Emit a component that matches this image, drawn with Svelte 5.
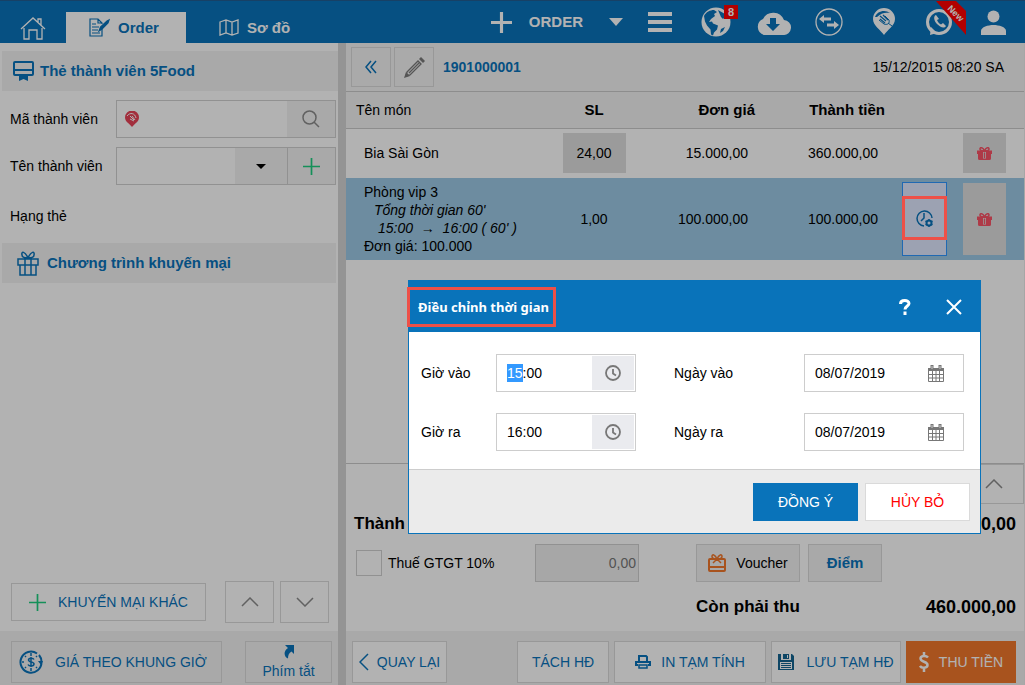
<script lang="ts">
  import { onMount } from 'svelte';

  type Item = {
    name: string;
    quantity: string;
    price: string;
    total: string;
    timed: boolean;
  };

  const items: Item[] = [
    { name: 'Bia Sài Gòn', quantity: '24,00', price: '15.000,00', total: '360.000,00', timed: false },
    { name: 'Phòng vip 3', quantity: '1,00', price: '100.000,00', total: '100.000,00', timed: true },
  ];

  let times = $state([
    { id: 'in', timeLabel: 'Giờ vào', time: '15:00', dateLabel: 'Ngày vào', date: '08/07/2019' },
    { id: 'out', timeLabel: 'Giờ ra', time: '16:00', dateLabel: 'Ngày ra', date: '08/07/2019' },
  ]);

  let showDialog = $state(true);

  // start with the hours selected so they can be typed over
  onMount(() => {
    const first = document.getElementById('time-in') as HTMLInputElement;
    first.focus();
    first.setSelectionRange(0, 2);
  });

  const close = () => {
    showDialog = false;
  };
</script>

{#snippet chevron(points: string)}
  <svg width="18" height="10" viewBox="0 0 18 10" fill="none" stroke="#8c8c8c" stroke-width="1.5">
    <polyline {points} />
  </svg>
{/snippet}

{#snippet plus(size: number, color: string, weight: number)}
  <svg width={size} height={size} viewBox="0 0 20 20" stroke={color} stroke-width={weight}>
    <path d="M10 0v20M0 10h20" />
  </svg>
{/snippet}

{#snippet gift()}
  <svg width="15" height="13" viewBox="0 0 15 13" fill="#f95366">
    <path d="M0 3.500h6V7H0zM9 3.500h6V7H9zM1 7h5v6H2.500Q1 13 1 11.500zM9 7h5v4.500Q14 13 12.500 13H9zM6 3.500h3V5H6zM6 11.500h3V13H6zM6.800 5.500h1.400v5.500H6.800z" />
    <path d="M7.500 4C6 0 3 0 3 2s2 2 4.500 2C10 4 12 4 12 2S9 0 7.500 4" fill="none" stroke="#f95366" stroke-width="1.600" />
  </svg>
{/snippet}

<div class="app">
  <header>
    <nav>
      <a class="home" href="#home" aria-label="Home">
        <svg width="26" height="24" viewBox="0 0 26 24" fill="none" stroke="#fff" stroke-width="1.3">
          <path d="M1 13 13 2l12 11M4 12v11h5v-9h8v9h5V12M18 6V3h3v6" />
        </svg>
      </a>
      <a class="tab active" href="#order">
        <svg width="21" height="19" viewBox="0 0 21 19" fill="none" stroke="#0973ba" stroke-width="1.2">
          <path d="M13 11v7H1V1h8l4 4v1M9 1v4h4M3 6h4M3 9h7M3 12h6M3 15h8" />
          <path d="m10 13 1.500-4L18 3l2-1-1 3-6 6z" fill="#0973ba" />
        </svg>
        Order
      </a>
      <a class="tab" href="#map">
        <svg width="20" height="17" viewBox="0 0 20 17" fill="none" stroke="#fff" stroke-width="1.3">
          <path d="m1 3 6-2 6 2 6-2v13l-6 2-6-2-6 2zM7 1v13M13 3v13" />
        </svg>
        Sơ đồ
      </a>
    </nav>

    <div class="tools">
      <button class="new-order">
        {@render plus(21, '#fff', 3)}
        ORDER
        <svg class="caret" width="14" height="8" viewBox="0 0 14 8" fill="#fff"><path d="M0 0h14L7 8z" /></svg>
      </button>
      <button class="menu" aria-label="Menu">
        <svg width="24" height="20" viewBox="0 0 24 20" fill="#fff"><path d="M0 0h24v4H0zM0 8h24v4H0zM0 16h24v4H0z" /></svg>
      </button>
      <button class="globe" aria-label="Online">
        <svg width="30" height="30" viewBox="0 0 30 30">
          <circle cx="15" cy="15" r="14.5" fill="#fff" />
          <path d="M3 9C5 5 9 3 13 3l3 2-3 2 1 2-4 3-2 3 3-.500 1 2 5 2-1 4-3 3-1 3-2-1-.500-5-3.500-4-2-4zM17 3l7 4 3 5-3-2-2 2-2-2zM20 22l4-2-2 4-3 2z" fill="#0973ba" />
        </svg>
        <span class="badge">8</span>
      </button>
      <button class="cloud" aria-label="Download">
        <svg width="36" height="25" viewBox="0 0 36 25">
          <path d="M9 25a8.500 8.500 0 0 1-1-16A11.500 11.500 0 0 1 29 10a7.500 7.500 0 0 1-1 15z" fill="#fff" />
          <path d="M15 8h6v6h4l-7 7-7-7h4z" fill="#0973ba" />
        </svg>
      </button>
      <button class="exchange" aria-label="Transfer">
        <svg width="28" height="28" viewBox="0 0 28 28">
          <circle cx="14" cy="14" r="13" fill="none" stroke="#fff" stroke-width="1.300" />
          <path d="m4 11 5-4v2.500h7v3H9V15zM24 17l-5-4v2.500h-7v3h7V21z" fill="#fff" />
        </svg>
      </button>
      <button class="place" aria-label="5Food">
        <svg width="24" height="28" viewBox="0 0 24 28">
          <path d="M12 27C9 22 1 18 1 11a11 11 0 0 1 22 0c0 7-8 11-11 16z" fill="#fff" />
          <path d="M3 9C5 3 13 1 18 5c-5-1-9 0-13 4z" fill="#0973ba" />
          <path d="m8 8 6 5M11 7l5 5M8 11l5 4" stroke="#0973ba" stroke-width="1.300" />
          <path d="m13 8 4 4c1 4-2 5-5 4l-5-4M16 15l4 3" fill="none" stroke="#0973ba" />
        </svg>
      </button>
      <button class="support" aria-label="Hotline">
        <svg width="40" height="35" viewBox="0 0 40 35">
          <circle cx="13" cy="21" r="11.500" fill="none" stroke="#fff" stroke-width="3" />
          <path d="m4 34 1-8 6 6z" fill="#fff" />
          <path d="M10 14c-3 1-2 6 1 9s7 5 9 2l-3-3-2 1.500c-2-1-3-2-4-4.500l2-1z" fill="#fff" />
          <path d="M10 0h20l10 10v24z" fill="#f00" />
          <text x="0" y="0" transform="translate(21 8) rotate(45)" font-size="9" font-weight="bold" fill="#fff">New</text>
        </svg>
      </button>
      <button class="user" aria-label="Account">
        <svg width="25" height="25" viewBox="0 0 25 25" fill="#fff">
          <circle cx="12.500" cy="6.500" r="6" />
          <path d="M0 25v-4c0-4 7-6 12.500-6S25 17 25 21v4z" />
        </svg>
      </button>
    </div>
  </header>

  <div class="columns">
    <aside>
      <h2 class="member">
        <svg width="21" height="20" viewBox="0 0 21 20" fill="none" stroke="#0973ba" stroke-width="2">
          <rect x="1" y="1" width="19" height="13" rx="1" />
          <path d="M1 9h19" />
          <path d="M6 14h9v6l-4.500-2L6 20z" fill="#0973ba" stroke="none" />
        </svg>
        Thẻ thành viên 5Food
      </h2>
      <div class="field">
        <label for="code">Mã thành viên</label>
        <div class="control">
          <svg class="pin" width="14" height="16" viewBox="0 0 14 16">
            <path d="M7 16C5 13 0 11 0 6.500a7 7 0 0 1 14 0C14 11 9 13 7 16z" fill="#e84458" />
            <path d="M2 5c3-4 8-3 9 2M5 5l4 4M7 5l3 4M5 8l4 2" stroke="#fff" fill="none" />
          </svg>
          <input id="code" type="text" />
          <button class="addon" aria-label="Tìm">
            <svg width="18" height="18" viewBox="0 0 18 18" fill="none" stroke="#8c8c8c" stroke-width="1.500">
              <circle cx="7.500" cy="7.500" r="6.500" /><path d="m12 12 5 5" />
            </svg>
          </button>
        </div>
      </div>
      <div class="field">
        <label for="name">Tên thành viên</label>
        <div class="control">
          <input id="name" type="text" />
          <button class="addon drop" aria-label="Chọn">
            <svg width="10" height="5" viewBox="0 0 10 5"><path d="M0 0h10L5 5z" /></svg>
          </button>
          <button class="addon add" aria-label="Thêm">{@render plus(17, '#1fcf80', 2)}</button>
        </div>
      </div>
      <p class="rank">Hạng thẻ</p>
      <h2 class="promo">
        <svg width="22" height="25" viewBox="0 0 22 25" fill="none" stroke="#0973ba" stroke-width="1.500">
          <path d="M1 8h20v6H1zM3 14v10h16V14M8 8v16M14 8v16M11 7C8 0 4 0 5 4c0 2 3 3 6 3s6-1 6-3c1-4-3-4-6 3" />
        </svg>
        Chương trình khuyến mại
      </h2>
      <div class="promo-actions">
        <button class="box other">{@render plus(17, '#1fcf80', 2)} KHUYẾN MẠI KHÁC</button>
        <button class="box arrow" aria-label="Lên">{@render chevron('1,9 9,1 17,9')}</button>
        <button class="box arrow" aria-label="Xuống">{@render chevron('1,1 9,9 17,1')}</button>
      </div>
      <div class="bottom">
        <button class="box by-time">
          <svg width="24" height="24" viewBox="0 0 24 24" fill="none" stroke="#0973ba" stroke-width="2">
            <path d="M22.500 12A10.500 10.500 0 1 1 18 3.500M22.500 12A10.500 10.500 0 0 0 20 5" />
            <path d="m19 11 3 4 2-4z" fill="#0973ba" stroke="none" />
            <path d="M12 3v3M12 18v3M3 12h2M6 6l1 1M6 18l1-1M18 6l-1 1M18 18l-1-1" stroke-width="1.500" />
            <path d="M15 9.500C14 7.500 9.500 8 9.500 10c0 2.500 5.500 1.500 5.500 4 0 2.500-5 2.500-6 .500M12 7v10" stroke-width="1.500" />
          </svg>
          GIÁ THEO KHUNG GIỜ
        </button>
        <button class="box shortcut">
          <svg width="11" height="14" viewBox="0 0 11 14" fill="#0973ba">
            <path d="M2 0h9v9L8.500 6.500C6 8 5 10 5 13.500 1 12 0 6 5 3z" />
          </svg>
          Phím tắt
        </button>
      </div>
    </aside>

    <main>
      <div class="bill-bar">
        <button class="box square" aria-label="Thu gọn">
          <svg width="12" height="14" viewBox="0 0 12 14" fill="none" stroke="#0973ba" stroke-width="1.500">
            <path d="M6 1 1 7l5 6M11 1 6 7l5 6" />
          </svg>
        </button>
        <button class="box square" aria-label="Sửa">
          <svg width="21" height="21" viewBox="0 0 21 21" fill="none" stroke="#7a7a7a" stroke-width="1.300">
            <path d="M3 15 14 4l3 3L6 18l-4 1zM5 16 15 6" />
            <path d="m15 2 2-2 4 4-2 2zM0 21l2-6 4 4z" fill="#7a7a7a" stroke="none" />
          </svg>
        </button>
        <a class="bill-no" href="#bill">1901000001</a>
        <time>15/12/2015 08:20 SA</time>
      </div>

      <table>
        <colgroup>
          <col />
          <col class="c-qty" />
          <col class="c-price" />
          <col class="c-total" />
          <col class="c-time" />
          <col class="c-gift" />
        </colgroup>
        <thead>
          <tr>
            <th class="name">Tên món</th>
            <th class="qty">SL</th>
            <th>Đơn giá</th>
            <th>Thành tiền</th>
            <th></th>
            <th></th>
          </tr>
        </thead>
        <tbody>
          {#each items as item}
            <tr class:selected={item.timed}>
              <td class="name">
                {item.name}
                {#if item.timed}
                  <div class="detail">Tổng thời gian 60'</div>
                  <div class="detail range">15:00 &nbsp;→&nbsp; 16:00 ( 60' )</div>
                  <div>Đơn giá: 100.000</div>
                {/if}
              </td>
              <td class="qty">
                {#if item.timed}
                  {item.quantity}
                {:else}
                  <button class="cell-button">{item.quantity}</button>
                {/if}
              </td>
              <td>{item.price}</td>
              <td>{item.total}</td>
              <td class="time">
                {#if item.timed}
                  <button class="adjust" aria-label="Điều chỉnh thời gian">
                    <svg width="18" height="18" viewBox="0 0 18 18" fill="none" stroke="#0973ba" stroke-width="1.500">
                      <path d="M16 8A7.500 7.500 0 1 0 8 16M8 3v5l-3 3" />
                      <circle cx="13" cy="13" r="2.500" stroke-width="2" />
                      <path d="M13 9v8M9.500 11l7 4M16.500 11l-7 4" stroke-dasharray="1.500 5" />
                    </svg>
                    <span class="mark"></span>
                  </button>
                {/if}
              </td>
              <td class="gift">
                <button class="cell-button" class:tall={item.timed} aria-label="Tặng">{@render gift()}</button>
              </td>
            </tr>
          {/each}
        </tbody>
      </table>

      <section class="totals">
        <button class="box collapse" aria-label="Thu gọn">{@render chevron('1,9 9,1 17,9')}</button>
        <div class="sum">
          <span>Thành tiền</span>
          <strong>460.000,00</strong>
        </div>
        <div class="extras">
          <input id="tax" type="checkbox" />
          <label for="tax">Thuế GTGT 10%</label>
          <input class="tax-value" type="text" value="0,00" aria-label="Tiền thuế" disabled />
          <div class="vouchers">
            <button class="box voucher">
              <svg width="18" height="18" viewBox="0 0 18 18" fill="none" stroke="#f1782c" stroke-width="2">
                <rect x="1" y="5" width="16" height="12" rx="1" />
                <path d="M1 13h16" />
                <path d="m5 9 4-4 4 4M9 5C7 0 4 0 4 2.500 4 5 7 5 9 5s5 0 5-2.500C14 0 11 0 9 5" stroke-width="1.500" />
              </svg>
              Voucher
            </button>
            <button class="box point">Điểm</button>
          </div>
        </div>
        <div class="sum due">
          <span>Còn phải thu</span>
          <strong>460.000,00</strong>
        </div>
      </section>

      <div class="bottom">
        <button class="box back">
          <svg width="10" height="18" viewBox="0 0 10 18" fill="none" stroke="#0973ba" stroke-width="1.500"><path d="M9 1 1 9l8 8" /></svg>
          QUAY LẠI
        </button>
        <button class="box split">TÁCH HĐ</button>
        <button class="box print">
          <svg width="16" height="14" viewBox="0 0 16 14" fill="none" stroke="#0973ba" stroke-width="2">
            <path d="M4 6V1h7l1 1v4M3 10H1V7h14v3h-2" />
            <path d="M4 10h8v3H4z" stroke-width="1.500" />
          </svg>
          IN TẠM TÍNH
        </button>
        <button class="box save">
          <svg width="16" height="16" viewBox="0 0 16 16">
            <path d="M0 0h3v6h10V0h1l2 2v14H0z" fill="#156591" />
            <path d="M5 0h6v5H5z" fill="#156591" />
            <path d="M9 1h1v3H9zM2 8h12v7H2z" fill="#fff" />
            <path d="M3 9.500h10M3 11.500h10M3 13.500h10" stroke="#156591" />
          </svg>
          LƯU TẠM HĐ
        </button>
        <button class="box pay">
          <svg width="10" height="20" viewBox="0 0 10 20" fill="none" stroke="#fff" stroke-width="2.500">
            <path d="M9 5.500C7 3 1.500 3.500 1.500 6.500c0 4 7 2.500 7 6.500 0 3.500-6 3.500-7.500 1M5 0v4M5 16v4" />
          </svg>
          THU TIỀN
        </button>
      </div>
    </main>
  </div>
</div>

{#if showDialog}
  <div class="backdrop">
    <div class="dialog" role="dialog" aria-labelledby="dialog-title">
      <div class="dialog-head">
        <h1 id="dialog-title">Điều chỉnh thời gian<span class="mark"></span></h1>
        <button class="help" aria-label="Trợ giúp">
          <svg width="12" height="16" viewBox="0 0 12 16" fill="none" stroke="#fff" stroke-width="3">
            <path d="M1.500 5c0-4.500 8.500-4.500 8.500-.500C10 7 6 7 6 10.500M6 12.500V16" />
          </svg>
        </button>
        <button class="close" aria-label="Đóng" onclick={close}>
          <svg width="16" height="16" viewBox="0 0 16 16" stroke="#fff" stroke-width="2"><path d="m1 1 14 14M15 1 1 15" /></svg>
        </button>
      </div>
      <div class="dialog-body">
        {#each times as row}
          <label for="time-{row.id}">{row.timeLabel}</label>
          <div class="picker">
            <input id="time-{row.id}" type="text" bind:value={row.time} />
            <button class="clock" aria-label="Chọn giờ">
              <svg width="16" height="16" viewBox="0 0 16 16" fill="none" stroke="#777" stroke-width="1.800">
                <circle cx="8" cy="8" r="7" /><path d="M8 4v4.500l3 2" />
              </svg>
            </button>
          </div>
          <label class="date-label" for="date-{row.id}">{row.dateLabel}</label>
          <div class="picker">
            <input id="date-{row.id}" type="text" bind:value={row.date} />
            <button class="calendar" aria-label="Chọn ngày">
              <svg width="16" height="17" viewBox="0 0 16 17" fill="none" stroke="#777">
                <path d="M.500 5.500h15v11H.500zM.500 9.500h15M.500 13h15M4.500 6v10M8 6v10M11.500 6v10" />
                <path d="M0 3h16v3H0z" fill="#777" stroke="none" />
                <path d="M4 0v5M12 0v5" stroke-width="3" />
                <path d="M4 1v3M12 1v3" stroke="#ccc" />
              </svg>
            </button>
          </div>
        {/each}
      </div>
      <div class="dialog-foot">
        <button class="ok" onclick={close}>ĐỒNG Ý</button>
        <button class="cancel" onclick={close}>HỦY BỎ</button>
      </div>
    </div>
  </div>
{/if}

<style>
  :global(body) {
    margin: 0;
    background: #fff;
  }

  .app,
  .backdrop {
    font-family: 'Liberation Sans', Arial, sans-serif;
    font-size: 14px;
    line-height: 18px;
    color: #000;
  }

  .app *,
  .backdrop * {
    box-sizing: border-box;
  }

  .app {
    display: flex;
    flex-direction: column;
    min-height: 100vh;
  }

  button,
  input {
    font: inherit;
    color: inherit;
    margin: 0;
    padding: 0;
    border: 0;
    border-radius: 0;
    background: none;
    outline: none;
  }

  button {
    display: flex;
    align-items: center;
    justify-content: center;
    white-space: nowrap;
  }

  svg {
    display: block;
    flex: none;
  }

  a {
    color: inherit;
    text-decoration: none;
  }

  header {
    display: flex;
    justify-content: space-between;
    height: 43px;
    border-top: 1px solid #225e92;
    background: #0973ba;
    color: #fff;
  }

  nav {
    display: flex;
    align-items: flex-end;
  }

  .home {
    width: 66px;
    padding: 0 0 3px 20px;
  }

  .tab {
    display: flex;
    align-items: center;
    gap: 8px;
    height: 31px;
    padding-left: 33px;
    font-size: 15px;
    font-weight: bold;
  }

  .tab.active {
    width: 120px;
    padding-left: 23px;
    background: #fff;
    color: #0973ba;
  }

  .tools {
    display: flex;
    align-items: center;
    padding-right: 19px;
  }

  .new-order {
    gap: 17px;
    font-size: 15px;
    font-weight: bold;
  }

  .caret {
    margin-left: 9px;
  }

  .menu {
    margin-left: 25px;
  }

  .globe {
    position: relative;
    margin-left: 29px;
  }

  .badge {
    position: absolute;
    top: -2px;
    right: -7px;
    width: 14px;
    height: 14px;
    background: #f00;
    font-size: 11px;
    font-weight: bold;
    line-height: 14px;
    text-align: center;
  }

  .cloud,
  .exchange {
    margin-left: 24px;
  }

  .place {
    margin-left: 29px;
  }

  .support {
    align-self: flex-start;
    margin-left: 30px;
  }

  .user {
    margin-left: 15px;
  }

  .columns {
    display: flex;
    flex: 1;
  }

  aside {
    display: flex;
    flex-direction: column;
    flex: none;
    width: 346px;
    border-right: 8px solid #d5d5d5;
  }

  h2 {
    display: flex;
    align-items: center;
    gap: 6px;
    height: 40px;
    margin: 0 0 0 2px;
    padding-left: 11px;
    background: #f2f2f2;
    color: #0973ba;
    font-size: 15px;
  }

  .member {
    margin-top: 8px;
  }

  .promo {
    gap: 8px;
    margin-right: 2px;
    padding-left: 15px;
  }

  .field {
    display: flex;
    align-items: center;
    margin: 9px 2px 0 10px;
  }

  .field label {
    width: 106px;
  }

  .control {
    display: flex;
    flex: 1;
    align-items: center;
    height: 38px;
    border: 1px solid #d0d0d0;
  }

  .control input {
    flex: 1;
    width: 0;
    height: 100%;
    padding: 0 8px;
  }

  .pin {
    margin-left: 8px;
  }

  .addon {
    width: 48px;
    height: 100%;
    background: #f2f2f2;
  }

  .drop {
    width: 52px;
  }

  .add {
    border-left: 1px solid #d0d0d0;
  }

  .rank {
    margin: 22px 10px 18px;
  }

  .box {
    border: 1px solid #dadada;
    background: #fff;
    color: #0973ba;
  }

  .promo-actions {
    display: flex;
    align-items: center;
    gap: 6px;
    margin-top: auto;
    padding: 0 9px 8px 11px;
  }

  .other {
    gap: 12px;
    width: 195px;
    height: 38px;
    margin-right: auto;
  }

  .arrow {
    width: 49px;
    height: 42px;
  }

  .bottom {
    display: flex;
    gap: 5px;
    height: 54px;
    padding: 10px 8px 2px 6px;
    background: #f2f2f2;
  }

  .bottom .box {
    height: 42px;
  }

  aside .bottom {
    justify-content: space-between;
    padding: 10px 6px 2px 11px;
  }

  aside .bottom .box {
    background: #f2f2f2;
  }

  .by-time {
    justify-content: flex-start;
    gap: 12px;
    width: 211px;
    padding-left: 7px;
  }

  .shortcut {
    flex-direction: column;
    gap: 3px;
    width: 87px;
  }

  main {
    display: flex;
    flex: 1;
    flex-direction: column;
    min-width: 0;
    border-right: 1px solid #eee;
  }

  .bill-bar {
    display: flex;
    align-items: center;
    gap: 3px;
    height: 49px;
    padding: 0 20px 0 5px;
    border-bottom: 1px solid #cbcbcb;
    background: #f4f4f4;
  }

  .square {
    width: 40px;
    height: 40px;
    background: #f4f4f4;
  }

  .bill-no {
    margin: 0 auto 0 6px;
    color: #0973ba;
    font-weight: bold;
  }

  table {
    width: 100%;
    border-collapse: collapse;
    table-layout: fixed;
  }

  .c-qty {
    width: 92px;
  }

  .c-price {
    width: 115px;
  }

  .c-total {
    width: 130px;
  }

  .c-time {
    width: 78px;
  }

  .c-gift {
    width: 61px;
  }

  th {
    height: 36px;
    padding: 0;
    border-bottom: 1px solid #cbcbcb;
    background: #f2f2f2;
    font-size: 15px;
    text-align: right;
  }

  th.name {
    padding-left: 10px;
    font-size: 14px;
    font-weight: normal;
  }

  td {
    height: 50px;
    padding: 0 7px 0 0;
    text-align: right;
  }

  td.name {
    padding-left: 18px;
  }

  .name {
    text-align: left;
  }

  th.qty,
  td.qty {
    padding: 0;
    text-align: center;
  }

  .selected {
    background: #9cc9e5;
  }

  .selected td {
    height: 82px;
  }

  .detail {
    padding-left: 10px;
    font-style: italic;
  }

  .range {
    padding-left: 14px;
  }

  .cell-button {
    width: 63px;
    height: 40px;
    margin: 0 auto;
    background: #dfdfdf;
  }

  td.time {
    padding: 0 16px 0 17px;
  }

  td.gift {
    padding: 0 18px 0 0;
  }

  .gift .cell-button {
    width: 43px;
  }

  .gift .tall {
    height: 72px;
  }

  .adjust {
    position: relative;
    width: 45px;
    height: 74px;
    border: 1px solid #2f97ff;
    background: #e0e9ff;
  }

  /* highlight frame, drawn above the dimmed page */
  .mark {
    position: absolute;
    z-index: 20;
    border: 3px solid #ee5048;
  }

  .adjust .mark {
    inset: 13px -1px 15px;
  }

  .totals {
    display: flex;
    flex-direction: column;
    margin-top: auto;
    padding: 0 8px 7px;
    border-top: 1px solid #cbcbcb;
  }

  .collapse {
    align-self: flex-end;
    width: 60px;
    height: 40px;
    margin-right: -8px;
  }

  .sum {
    display: flex;
    justify-content: space-between;
    align-items: center;
    height: 40px;
    font-size: 17px;
    font-weight: bold;
  }

  .sum strong {
    font-size: 18px;
  }

  .extras {
    display: flex;
    align-items: center;
    height: 38px;
    white-space: nowrap;
  }

  .extras input[type='checkbox'] {
    appearance: none;
    flex: none;
    width: 26px;
    height: 26px;
    margin: 0 6px 0 2px;
    border: 1px solid #d0d0d0;
  }

  .tax-value {
    width: 104px;
    height: 38px;
    margin: 0 57px 0 auto;
    padding-right: 2px;
    border: 1px solid #d0d0d0;
    background: #f0f0f0;
    color: #777;
    text-align: right;
  }

  .vouchers {
    display: flex;
    flex: 0 0 320px;
    gap: 8px;
  }

  .voucher,
  .point {
    width: 104px;
    height: 38px;
    background: #f2f2f2;
  }

  .voucher {
    gap: 10px;
    color: #000;
  }

  .point {
    width: 74px;
    font-size: 15px;
    font-weight: bold;
  }

  .due {
    align-self: flex-end;
    width: 320px;
    height: 34px;
    margin-top: 8px;
  }

  .back {
    gap: 8px;
    width: 95px;
    margin-right: auto;
  }

  .split {
    width: 92px;
  }

  .print {
    gap: 10px;
    width: 152px;
  }

  .save {
    gap: 12px;
    width: 130px;
  }

  .pay {
    gap: 10px;
    width: 110px;
    border-color: #f1782c;
    background: #f1782c;
    color: #fff;
  }

  .backdrop {
    position: fixed;
    inset: 0;
    z-index: 10;
    display: flex;
    align-items: flex-start;
    justify-content: flex-end;
    padding: 280px 44px 0 0;
    background: rgba(0, 0, 0, 0.3);
  }

  .dialog {
    width: 573px;
    border: 1px solid #0973ba;
    background: #fff;
  }

  .dialog-head {
    display: flex;
    align-items: center;
    height: 51px;
    padding: 0 18px 0 9px;
    background: #0973ba;
    color: #fff;
  }

  h1 {
    position: relative;
    margin: 0 auto 0 0;
    font-family: 'Noto Sans', Tahoma, sans-serif;
    font-size: 13px;
    line-height: 18px;
  }

  h1 .mark {
    inset: -11px -7px -11px -11px;
  }

  .help {
    margin-right: 35px;
  }

  .dialog-body {
    display: grid;
    grid-template-columns: 75px 140px 1fr 160px;
    row-gap: 21px;
    align-items: center;
    padding: 22px 16px 18px 12px;
    border-bottom: 1px solid #cdcdcd;
  }

  .date-label {
    padding-left: 38px;
  }

  .picker {
    display: flex;
    height: 38px;
    padding: 1px;
    border: 1px solid #cdcdcd;
  }

  .picker input {
    flex: 1;
    width: 0;
    padding-left: 9px;
  }

  .picker input::selection {
    background: #3399ff;
    color: #fff;
  }

  .clock {
    width: 42px;
    background: #eaebef;
  }

  .calendar {
    width: 52px;
  }

  .dialog-foot {
    display: flex;
    justify-content: flex-end;
    gap: 7px;
    padding: 13px 10px 12px;
    background: #ebebeb;
  }

  .dialog-foot button {
    width: 105px;
    height: 38px;
  }

  .ok {
    background: #0973ba;
    color: #fff;
  }

  .cancel {
    border: 1px solid #dadada;
    background: #fff;
    color: #f00;
  }
</style>
